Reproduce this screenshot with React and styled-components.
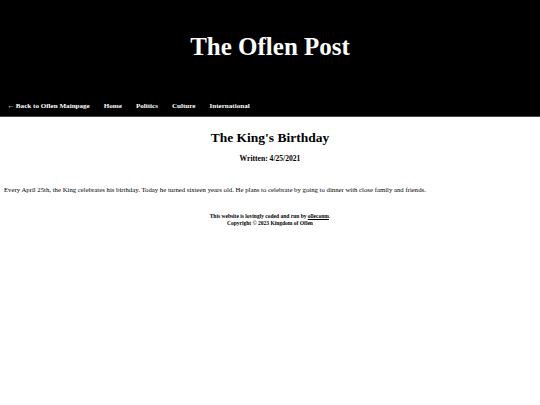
import React from 'react';
import styled, { createGlobalStyle } from 'styled-components';

const GlobalStyle = createGlobalStyle`
  html, body {
    margin: 0;
    padding: 0;
    background: #ffffff;
    font-family: "Liberation Serif", "Times New Roman", serif;
    color: #000;
  }
`;

const Header = styled.header`
  background: #000;
  border-bottom: 1px solid #4a4a4a;
  padding: 33px 0 5px;
`;

const Masthead = styled.h1`
  margin: 0;
  text-align: center;
  color: #fff;
  font-size: 25px;
  line-height: 28px;
  font-weight: bold;
`;

const Nav = styled.nav`
  display: flex;
  gap: 14px;
  margin-top: 40px;
  padding-left: 7px;
`;

const NavLink = styled.a`
  color: #fff;
  text-decoration: none;
  font-size: 7.1px;
  line-height: 10px;
  font-weight: bold;
`;

const Article = styled.main`
  padding: 13px 4px 0;
`;

const Title = styled.h2`
  margin: 0;
  text-align: center;
  font-size: 13.5px;
  line-height: 16px;
  font-weight: bold;
`;

const Written = styled.h3`
  margin: 8px 0 0;
  text-align: center;
  font-size: 7.6px;
  line-height: 10px;
  font-weight: bold;
`;

const Body = styled.p`
  margin: 21px 0 0;
  font-size: 6.75px;
  line-height: 9px;
`;

const Footer = styled.footer`
  margin-top: 19px;
  text-align: center;
  font-size: 5.5px;
  line-height: 7px;
  font-weight: bold;
`;

const FooterLink = styled.a`
  color: #000;
  text-decoration: underline;
`;

const links = ['← Back to Oflen Mainpage', 'Home', 'Politics', 'Culture', 'International'];

const App = () => {
  return (
    <>
      <GlobalStyle />
      <Header>
        <Masthead>The Oflen Post</Masthead>
        <Nav>
          {links.map((l) => (
            <NavLink key={l} href="#">{l}</NavLink>
          ))}
        </Nav>
      </Header>
      <Article>
        <Title>The King's Birthday</Title>
        <Written>Written: 4/25/2021</Written>
        <Body>
          Every April 25th, the King celebrates his birthday. Today he turned sixteen years old. He plans to celebrate by going to dinner with close family and friends.
        </Body>
        <Footer>
          This website is lovingly coded and run by <FooterLink href="#">olleconm</FooterLink>.
          <br />
          Copyright © 2023 Kingdom of Oflen
        </Footer>
      </Article>
    </>
  );
};

export default App;
